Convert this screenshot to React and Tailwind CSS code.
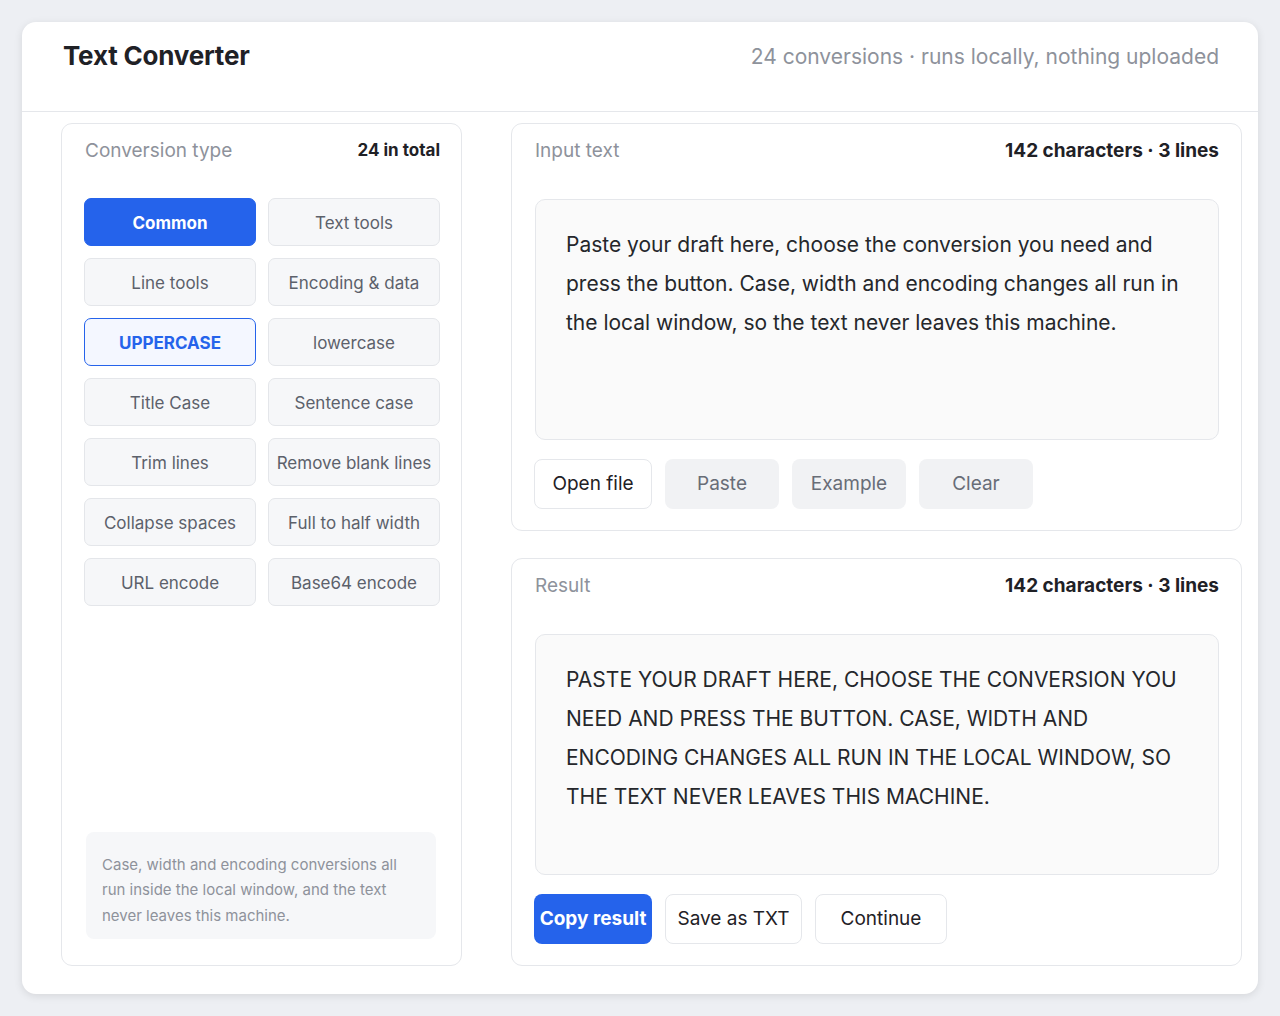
import React from "react";

const types = [
  "Common",
  "Text tools",
  "Line tools",
  "Encoding & data",
  "UPPERCASE",
  "lowercase",
  "Title Case",
  "Sentence case",
  "Trim lines",
  "Remove blank lines",
  "Collapse spaces",
  "Full to half width",
  "URL encode",
  "Base64 encode",
];

function TypeButton({ label }) {
  if (label === "Common") {
    return (
      <button className="h-[48px] pt-[3px] rounded-[7px] bg-[#2563eb] border border-[#2563eb] text-white font-bold text-[17px]">
        {label}
      </button>
    );
  }
  if (label === "UPPERCASE") {
    return (
      <button className="h-[48px] pt-[3px] rounded-[7px] bg-[#f4f7ff] border border-[#2563eb] text-[#2563eb] font-bold text-[17px]">
        {label}
      </button>
    );
  }
  return (
    <button className="h-[48px] pt-[3px] rounded-[7px] bg-[#f6f7f9] border border-[#e4e6ea] text-[#5c616b] text-[17px] whitespace-nowrap">
      {label}
    </button>
  );
}

function PanelHeader({ label, right }) {
  return (
    <div className="flex items-center justify-between h-[28px] mb-[34px]">
      <span className="text-[19px] text-[#8e929b]">{label}</span>
      <span className="text-[19px] font-bold text-[#1f2126]">{right}</span>
    </div>
  );
}

export default function App() {
  return (
    <div
      className="min-h-[1016px] bg-[#edeff3] p-[22px]"
      style={{ fontFamily: "Inter, 'Noto Sans', sans-serif" }}
    >
      <div className="bg-white rounded-[14px] shadow-[0_2px_8px_rgba(0,0,0,0.10)] h-[972px] flex flex-col overflow-hidden">
        <header className="h-[90px] shrink-0 border-b border-[#e5e7eb] flex items-start justify-between pl-[41px] pr-[39px] pt-[18px]">
          <h1 className="text-[26px] leading-[32px] font-bold text-[#1f2126] tracking-[-0.2px]">Text Converter</h1>
          <span className="text-[21px] leading-[34px] text-[#8e929b]">
            24 conversions · runs locally, nothing uploaded
          </span>
        </header>
        <div className="flex-1 flex pl-[39px] pr-[16px] pt-[11px] pb-[28px] gap-[49px]">
          {/* Left panel */}
          <section className="w-[401px] shrink-0 border border-[#e5e7eb] rounded-[11px] pl-[22px] pr-[21px] pt-[13px] pb-[26px] flex flex-col">
            <div className="flex items-center justify-between h-[28px] mb-[33px] pl-[1px]">
              <span className="text-[19px] text-[#8e929b]">Conversion type</span>
              <span className="text-[17px] font-bold text-[#1f2126]">24 in total</span>
            </div>
            <div className="grid grid-cols-2 gap-3">
              {types.map((t) => (
                <TypeButton key={t} label={t} />
              ))}
            </div>
            <div className="flex-1" />
            <div className="ml-[2px] mr-[4px] rounded-[8px] bg-[#f6f7f9] px-4 pt-[20px] pb-[11px] text-[15px] leading-[25.5px] text-[#8e929b] whitespace-nowrap">
              Case, width and encoding conversions all
              <br />
              run inside the local window, and the text
              <br />
              never leaves this machine.
            </div>
          </section>

          {/* Right column */}
          <div className="flex-1 flex flex-col gap-[27px]">
            <section className="h-[408px] border border-[#e5e7eb] rounded-[11px] pl-[23px] pr-[22px] pt-[13px] flex flex-col">
              <PanelHeader label="Input text" right="142 characters · 3 lines" />
              <div className="h-[241px] rounded-[10px] border border-[#e5e7eb] bg-[#fafafa] pl-[30px] pr-[10px] pt-[25px] text-[21px] leading-[39px] text-[#25272b] whitespace-nowrap">
                Paste your draft here, choose the conversion you need and
                <br />
                press the button. Case, width and encoding changes all run in
                <br />
                the local window, so the text never leaves this machine.
              </div>
              <div className="flex gap-[13px] mt-[19px] -ml-[1px]">
                <button className="h-[50px] w-[118px] rounded-[8px] border border-[#e5e7eb] bg-white text-[19px] text-[#1f2126]">
                  Open file
                </button>
                <button className="h-[50px] w-[114px] rounded-[8px] bg-[#f1f2f4] text-[19px] text-[#686d77]">
                  Paste
                </button>
                <button className="h-[50px] w-[114px] rounded-[8px] bg-[#f1f2f4] text-[19px] text-[#686d77]">
                  Example
                </button>
                <button className="h-[50px] w-[114px] rounded-[8px] bg-[#f1f2f4] text-[19px] text-[#686d77]">
                  Clear
                </button>
              </div>
            </section>

            <section className="h-[408px] border border-[#e5e7eb] rounded-[11px] pl-[23px] pr-[22px] pt-[13px] flex flex-col">
              <PanelHeader label="Result" right="142 characters · 3 lines" />
              <div className="h-[241px] rounded-[10px] border border-[#e5e7eb] bg-[#fafafa] pl-[30px] pr-[10px] pt-[25px] text-[21px] leading-[39px] text-[#25272b] whitespace-nowrap">
                PASTE YOUR DRAFT HERE, CHOOSE THE CONVERSION YOU
                <br />
                NEED AND PRESS THE BUTTON. CASE, WIDTH AND
                <br />
                ENCODING CHANGES ALL RUN IN THE LOCAL WINDOW, SO
                <br />
                THE TEXT NEVER LEAVES THIS MACHINE.
              </div>
              <div className="flex gap-[13px] mt-[19px] -ml-[1px]">
                <button className="h-[50px] w-[118px] rounded-[8px] bg-[#2563eb] text-[19px] font-bold text-white whitespace-nowrap">
                  Copy result
                </button>
                <button className="h-[50px] w-[137px] rounded-[8px] border border-[#e5e7eb] bg-white text-[19px] text-[#1f2126]">
                  Save as TXT
                </button>
                <button className="h-[50px] w-[132px] rounded-[8px] border border-[#e5e7eb] bg-white text-[19px] text-[#1f2126]">
                  Continue
                </button>
              </div>
            </section>
          </div>
        </div>
      </div>
    </div>
  );
}
